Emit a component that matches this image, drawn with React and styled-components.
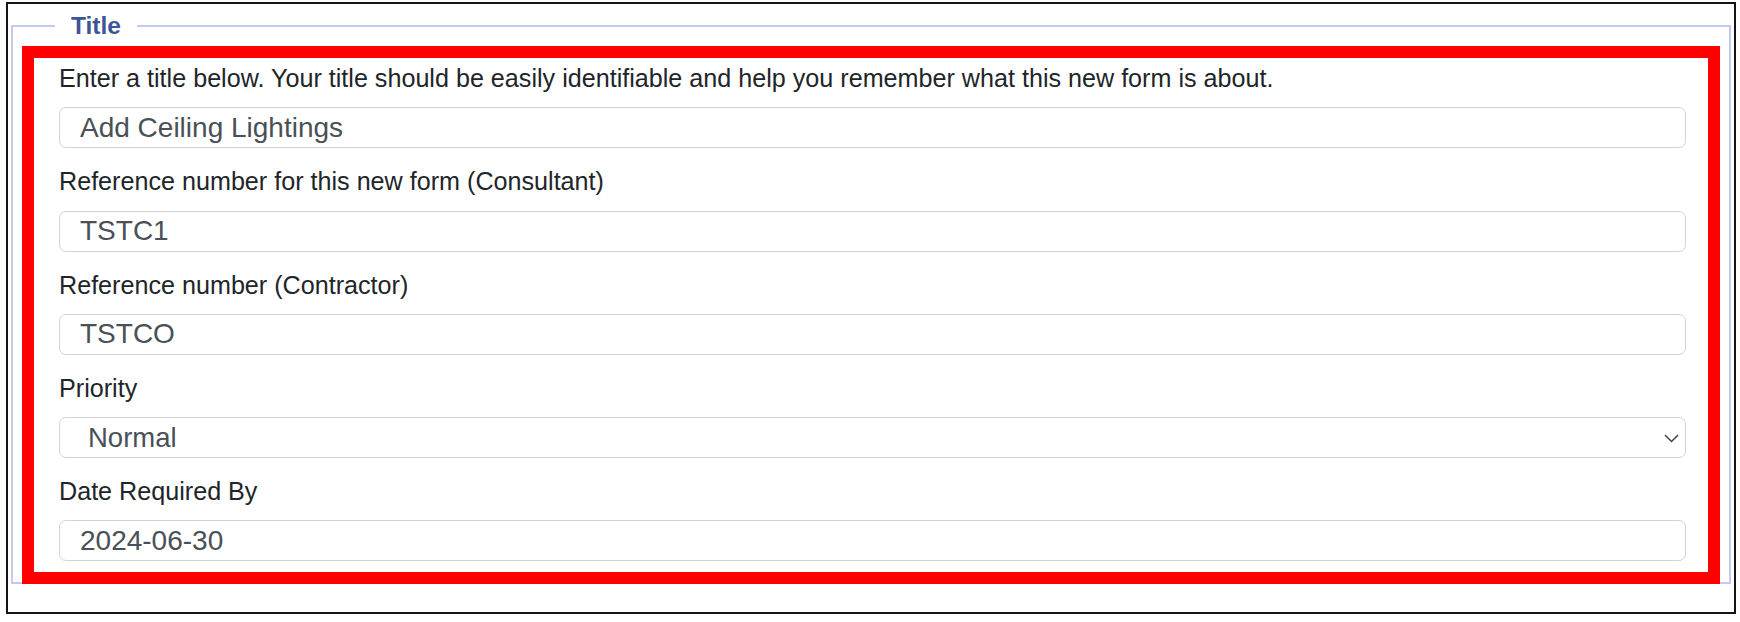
import React from 'react'
import styled, { createGlobalStyle } from 'styled-components'

const GlobalStyle = createGlobalStyle`
  body {
    margin: 0;
    background: #fff;
    font-family: 'Liberation Sans', Arial, sans-serif;
  }
`

const Frame = styled.div`
  margin: 2px 4px 8px 6px;
  border: 2px solid #141414;
  padding: 8px 3px 28px 3px;
`

const Fieldset = styled.fieldset`
  margin: 0;
  padding: 0 9px;
  min-width: 0;
  border: 2px solid #c3cbeb;
`

const Legend = styled.legend`
  margin-left: 33px;
  padding: 0 16px;
  font-size: 24.5px;
  line-height: 28px;
  font-weight: 700;
  color: #3b5597;
`

const Highlight = styled.div`
  margin: 6px 0 -2px;
  border: 12px solid #ff0000;
  padding: 5px 22px 11px 25px;
`

const Text = styled.div`
  font-size: 25.15px;
  line-height: 30px;
  color: #212529;
  margin-bottom: 14.25px;
`

const Field = styled.div`
  position: relative;
  margin-bottom: ${props => (props.last ? 0 : 18)}px;
`

const Input = styled.input`
  display: block;
  box-sizing: border-box;
  width: 100%;
  height: 41px;
  margin: 0;
  padding: 0 12px 0 20px;
  border: 1px solid #ced4da;
  border-radius: 7px;
  background: #fff;
  font-family: 'Liberation Sans', Arial, sans-serif;
  font-size: 28px;
  color: #495057;
  outline: none;
`

const Select = styled.select`
  display: block;
  box-sizing: border-box;
  width: 100%;
  height: 41px;
  margin: 0;
  padding: 0 40px 0 28px;
  border: 1px solid #ced4da;
  border-radius: 7px;
  background: #fff;
  appearance: none;
  font-family: 'Liberation Sans', Arial, sans-serif;
  font-size: 27.5px;
  color: #495057;
  outline: none;
`

const Chevron = styled.svg`
  position: absolute;
  right: 7px;
  top: 50%;
  width: 15px;
  height: 9px;
  margin-top: -4px;
  pointer-events: none;
`

const fields = [
  { label: 'Reference number for this new form (Consultant)', value: 'TSTC1' },
  { label: 'Reference number (Contractor)', value: 'TSTCO' },
]

export default function App () {
  return (
    <>
      <GlobalStyle />
      <Frame>
        <Fieldset>
          <Legend>Title</Legend>
          <Highlight>
            <Text>Enter a title below. Your title should be easily identifiable and help you remember what this new form is about.</Text>
            <Field>
              <Input type="text" defaultValue="Add Ceiling Lightings" />
            </Field>

            {fields.map(f => (
              <React.Fragment key={f.label}>
                <Text>{f.label}</Text>
                <Field>
                  <Input type="text" defaultValue={f.value} />
                </Field>
              </React.Fragment>
            ))}

            <Text>Priority</Text>
            <Field>
              <Select defaultValue="Normal">
                <option>Low</option>
                <option>Normal</option>
                <option>High</option>
              </Select>
              <Chevron viewBox="0 0 15 9">
                <path d="M1 1 L7.5 7.5 L14 1" fill="none" stroke="#444" strokeWidth="1.5" />
              </Chevron>
            </Field>

            <Text>Date Required By</Text>
            <Field last>
              <Input type="text" defaultValue="2024-06-30" />
            </Field>
          </Highlight>
        </Fieldset>
      </Frame>
    </>
  )
}
